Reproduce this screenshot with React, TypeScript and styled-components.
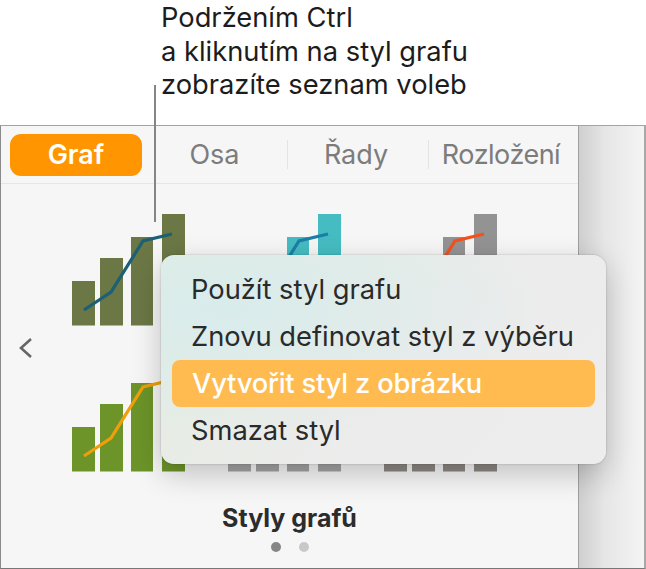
import { createGlobalStyle, styled } from "styled-components";

const GlobalStyle = createGlobalStyle`
  html, body {
    margin: 0;
    padding: 0;
    background: #fff;
  }
  body {
    font-family: Inter, "Noto Sans", "Liberation Sans", sans-serif;
  }
`;

const tabs = ["Osa", "Řady", "Rozložení"];
const menuItems = ["Použít styl grafu", "Znovu definovat styl z výběru", "Vytvořit styl z obrázku", "Smazat styl"];

const charts = [
  { bar: "#6b7745", line: "#1b6074" },
  { bar: "#45bcc2", line: "#1d7fa6" },
  { bar: "#939393", line: "#f4511e" },
  { bar: "#6c9429", line: "#ee9f0b" },
  { bar: "#a3a3a3", line: "#8a8a8a" },
  { bar: "#8c8782", line: "#777" },
];

const ChartIcon = ({ bar, line }: { bar: string; line: string }) => (
  <svg width="113" height="112" viewBox="0 0 113 112">
    <rect x="0" y="67" width="23" height="44.5" fill={bar} />
    <rect x="28" y="44" width="23" height="67.5" fill={bar} />
    <rect x="59" y="23" width="22" height="88.5" fill={bar} />
    <rect x="90" y="0" width="23" height="111.5" fill={bar} />
    <polyline points="12,96 39,78 71,27 100,20" fill="none" stroke={line} strokeWidth="3.2" />
  </svg>
);

export default function App() {
  return (
    <Page>
      <GlobalStyle />
      <Callout>
        Podržením Ctrl
        <br />
        a kliknutím na styl grafu
        <br />
        zobrazíte seznam voleb
      </Callout>
      <LeaderLine />
      <Window>
        <Panel>
          <TabBar>
            <ActiveTab>Graf</ActiveTab>
            {tabs.map((tab, i) => (
              <Tab key={tab} $last={i === tabs.length - 1}>
                {tab}
              </Tab>
            ))}
          </TabBar>
          <Gallery>
            <PrevButton>
              <svg width="16" height="24" viewBox="0 0 16 24">
                <polyline points="13,3 3,12 13,21" fill="none" stroke="#666" strokeWidth="2.6" />
              </svg>
            </PrevButton>
            <ChartGrid>
              {charts.map((c, i) => (
                <ChartIcon key={i} bar={c.bar} line={c.line} />
              ))}
            </ChartGrid>
          </Gallery>
          <Title>Styly grafů</Title>
          <Dots>
            <Dot $active />
            <Dot />
          </Dots>
        </Panel>
        <Side />
      </Window>
      <Menu>
        {menuItems.map((item, i) => (
          <MenuItem key={item} $selected={i === 2}>
            {item}
          </MenuItem>
        ))}
      </Menu>
    </Page>
  );
}

const Page = styled.div`
  position: relative;
  width: 646px;
  height: 569px;
  overflow: hidden;
  display: flex;
  flex-direction: column;
`;

const Callout = styled.div`
  height: 125px;
  box-sizing: border-box;
  padding: 1px 0 0 161px;
  font-size: 27.3px;
  line-height: 33.5px;
  color: #1c1c1c;
`;

const LeaderLine = styled.div`
  position: absolute;
  left: 154px;
  top: 85px;
  width: 2px;
  height: 137px;
  background: #858585;
  z-index: 2;
`;

const Window = styled.div`
  flex: 1;
  display: flex;
  box-sizing: border-box;
  border-top: 1.5px solid #a3a3a3;
  border-left: 1px solid #8a8a8a;
  border-right: 2px solid #a8a8a8;
  border-bottom: 1px solid #777;
`;

const Panel = styled.div`
  width: 578px;
  box-sizing: border-box;
  background: #f6f6f6;
  border-right: 1px solid #a0a0a0;
  display: flex;
  flex-direction: column;
`;

const Side = styled.div`
  flex: 1;
  background: linear-gradient(90deg, #cfcfcf 0%, #e6e6e6 40%, #f4f4f4 100%);
`;

const TabBar = styled.div`
  height: 58px;
  box-sizing: border-box;
  display: grid;
  grid-template-columns: 132px 146px 141px 1fr;
  align-items: center;
  padding: 0 5px 0 9px;
  border-bottom: 1px solid #e6e6e6;
  font-size: 27px;
`;

const ActiveTab = styled.div`
  height: 42px;
  border-radius: 11px;
  background: #ff9500;
  color: #fff;
  font-weight: 600;
  display: flex;
  align-items: center;
  justify-content: center;
`;

const Tab = styled.div<{ $last?: boolean }>`
  height: 29px;
  box-sizing: border-box;
  display: flex;
  align-items: center;
  justify-content: center;
  color: #7c7c7c;
  letter-spacing: ${(p) => (p.$last ? "-0.5px" : "0")};
  border-right: ${(p) => (p.$last ? "none" : "1.5px solid #e4e4e4")};
  &:nth-child(3) {
    padding-right: 4px;
  }
`;

const Gallery = styled.div`
  display: flex;
  align-items: center;
  padding-top: 30px;
`;

const PrevButton = styled.div`
  width: 71px;
  padding: 10px 0 0 17px;
  box-sizing: border-box;
  display: flex;
`;

const ChartGrid = styled.div`
  display: grid;
  grid-template-columns: repeat(3, 113px);
  column-gap: 43px;
  row-gap: 34px;
  filter: blur(0.4px);
`;

const Title = styled.div`
  margin-top: 31px;
  text-align: center;
  font-size: 25px;
  font-weight: 700;
  color: #2c2c2c;
`;

const Dots = styled.div`
  display: flex;
  justify-content: center;
  gap: 18px;
  margin-top: 9px;
`;

const Dot = styled.span<{ $active?: boolean }>`
  width: 10px;
  height: 10px;
  border-radius: 50%;
  background: ${(p) => (p.$active ? "#868686" : "#c8c8c8")};
`;

const Menu = styled.div`
  position: absolute;
  left: 161px;
  top: 255px;
  width: 445px;
  height: 209px;
  box-sizing: border-box;
  padding: 11px 11px;
  border-radius: 13px;
  background: radial-gradient(ellipse at 15% 25%, #d8ecec 0%, rgba(222, 236, 236, 0) 60%),
    linear-gradient(135deg, #e4ecdf 0%, #ececec 60%, #ededed 100%);
  box-shadow: 0 10px 30px rgba(0, 0, 0, 0.22), 0 0 2px rgba(0, 0, 0, 0.25);
  z-index: 3;
`;

const MenuItem = styled.div<{ $selected?: boolean }>`
  height: 47px;
  padding-left: ${(p) => (p.$selected ? "20px" : "19px")};
  display: flex;
  align-items: center;
  font-size: 27.3px;
  font-weight: ${(p) => (p.$selected ? 500 : 400)};
  letter-spacing: ${(p) => (p.$selected ? "-0.2px" : "0")};
  border-radius: 8px;
  color: ${(p) => (p.$selected ? "#fff" : "#2a2a2a")};
  background: ${(p) => (p.$selected ? "#ffbb4f" : "transparent")};
`;
